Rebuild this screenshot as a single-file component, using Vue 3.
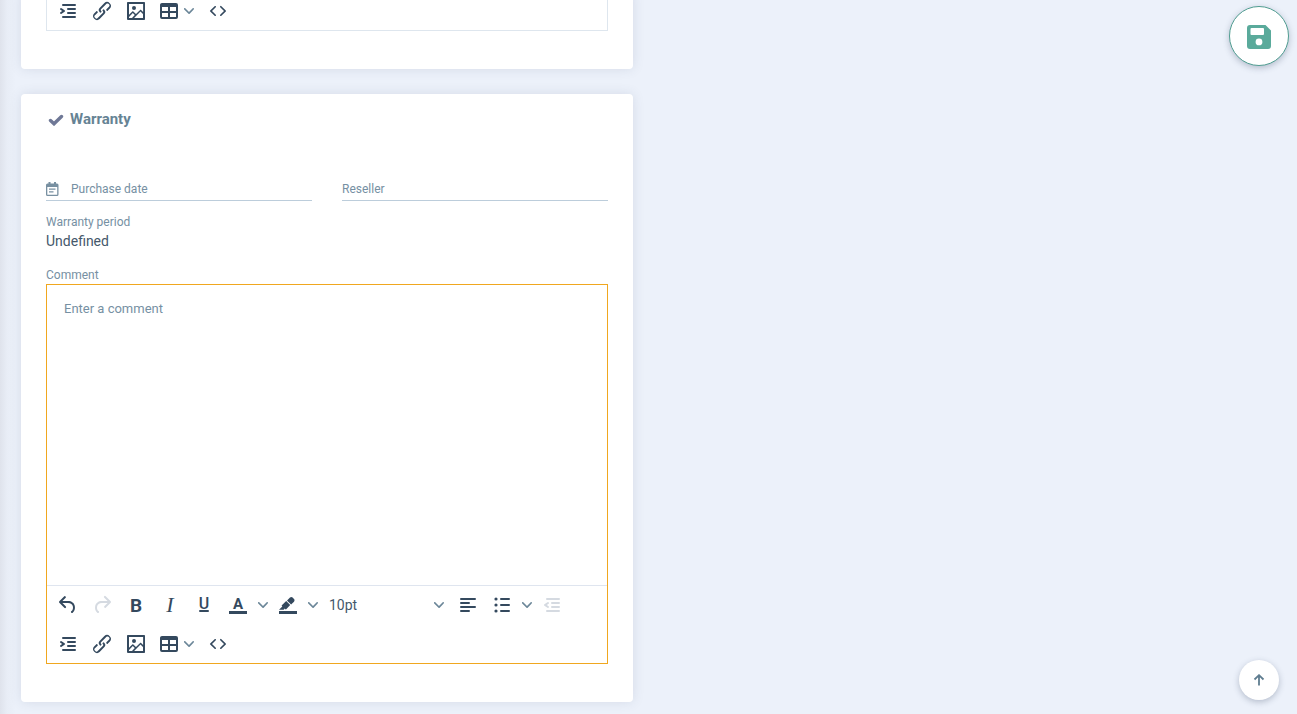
<script setup>
import { ref, h } from 'vue'

const comment = ref('')
const fontSize = ref('10pt')

const lines = (rows) => rows.map(([x, y, w]) => `M${x + 1} ${y}h${w - 2}a1 1 0 0 1 0 2H${x + 1}a1 1 0 0 1 0-2z`).join('')

const paths = {
  undo: 'M6.4 8H12c3.7 0 6.2 2 6.8 5.1.6 2.7-.4 5.6-2.3 6.8a1 1 0 0 1-1-1.8c1.1-.6 1.8-2.7 1.4-4.6-.5-2.1-2.1-3.5-4.9-3.5H6.4l3.3 3.3a1 1 0 1 1-1.4 1.4l-5-5a1 1 0 0 1 0-1.4l5-5a1 1 0 0 1 1.4 1.4L6.4 8z',
  redo: 'M17.6 10H12c-2.8 0-4.4 1.4-4.9 3.5-.4 2 .3 4 1.4 4.6a1 1 0 1 1-1 1.8c-2-1.2-2.9-4.1-2.3-6.8.6-3 3-5.1 6.8-5.1h5.6l-3.3-3.3a1 1 0 1 1 1.4-1.4l5 5a1 1 0 0 1 0 1.4l-5 5a1 1 0 0 1-1.4-1.4l3.3-3.3z',
  underline: 'M8 17h8a1 1 0 0 1 0 2H8a1 1 0 0 1 0-2z',
  color: 'M3 18h18v3H3z',
  highlight: 'M3 18h18v3H3zM7.7 16.7H3l3.3-3.3-.7-.8L10.2 8l4 4.1-4 4.2c-.2.2-.6.2-.8 0l-.6-.7-1.1 1.1zm5-7.5L11 7.4l3-2.9a2 2 0 0 1 2.6 0L18 6c.7.7.7 2 0 2.7l-2.9 2.9-1.8-1.8-.5-.6',
  align: lines([[4, 5, 16], [4, 9, 10], [4, 13, 16], [4, 17, 10]]),
  list: lines([[10, 5, 10], [10, 11, 10], [10, 17, 10]]) + [6, 12, 18].map((y) => `M4.4 ${y}a1.6 1.6 0 1 0 3.2 0a1.6 1.6 0 1 0-3.2 0z`).join(''),
  outdent: lines([[6, 5, 14], [11, 9, 9], [11, 13, 9], [6, 17, 14]]) + 'M8.6 13.2a1 1 0 0 1-1.2 1.6l-3-2a1 1 0 0 1 0-1.6l3-2a1 1 0 0 1 1.2 1.6L6.8 12l1.8 1.2z',
  indent: lines([[6, 5, 14], [11, 9, 9], [11, 13, 9], [6, 17, 14]]) + 'M4.4 13.2L6.2 12l-1.8-1.2a1 1 0 0 1 1.2-1.6l3 2a1 1 0 0 1 0 1.6l-3 2a1 1 0 1 1-1.2-1.6z',
  link: 'M6.2 12.3a1 1 0 0 1 1.4 1.4l-2.1 2a2 2 0 1 0 2.7 2.8l4.8-4.8a1 1 0 0 0 0-1.4 1 1 0 1 1 1.4-1.3 2.9 2.9 0 0 1 0 4L9.6 20a3.9 3.9 0 0 1-5.5-5.5l2-2zm11.6-.6a1 1 0 0 1-1.4-1.4l2-2a2 2 0 1 0-2.6-2.8L11 10.3a1 1 0 0 0 0 1.4A1 1 0 1 1 9.6 13a2.9 2.9 0 0 1 0-4L14.4 4a3.9 3.9 0 0 1 5.5 5.5l-2 2z',
  image: 'M5 15.7l3.3-3.2c.3-.3.7-.3 1 0L12 15l4.1-4c.3-.4.8-.4 1 0l2 1.9V5H5v10.7zM5 18V19h3l2.8-2.9-2-2L5 17.9zm14-3l-2.5-2.4-6.4 6.5H19v-4zM4 3h16c.6 0 1 .4 1 1v16c0 .6-.4 1-1 1H4a1 1 0 0 1-1-1V4c0-.6.4-1 1-1zm6 8a2 2 0 1 0 0-4 2 2 0 0 0 0 4z',
  table: 'M19 4a2 2 0 0 1 2 2v12a2 2 0 0 1-2 2H5a2 2 0 0 1-2-2V6c0-1.1.9-2 2-2h14zM5 14v4h6v-4H5zm14 0h-6v4h6v-4zm0-6h-6v4h6V8zM5 12h6V8H5v4z',
  code: 'M9.8 15.7c.3.3.3.8 0 1-.3.4-.9.4-1.2 0l-4.4-4.1a.8.8 0 0 1 0-1.2l4.4-4.2c.3-.3.9-.3 1.2 0 .3.3.3.8 0 1.1L6 12l3.8 3.7zM14.2 15.7c-.3.3-.3.8 0 1 .4.4.9.4 1.2 0l4.4-4.1c.3-.3.3-.8 0-1.2l-4.4-4.2a.8.8 0 0 0-1.2 0c-.3.3-.3.8 0 1.1L18 12l-3.8 3.7z',
}

const letters = {
  bold: { char: 'B', y: 19, size: 19, family: 'Roboto', weight: 700 },
  italic: { char: 'I', y: 19, size: 22, family: 'Liberation Serif', style: 'italic' },
  underline: { char: 'U', y: 16, size: 16, family: 'Roboto', weight: 500 },
  color: { char: 'A', y: 16, size: 15, family: 'Roboto', weight: 700 },
}

const Icon = (props) => {
  const letter = letters[props.name]
  return h('svg', { width: 24, height: 24, viewBox: '0 0 24 24', fill: 'currentColor', 'aria-hidden': 'true' }, [
    paths[props.name] && h('path', { d: paths[props.name], 'fill-rule': props.name === 'image' ? 'evenodd' : 'nonzero' }),
    letter && h('text', {
      x: 12, y: letter.y, 'text-anchor': 'middle', 'font-size': letter.size,
      'font-family': letter.family, 'font-weight': letter.weight, 'font-style': letter.style,
    }, letter.char),
  ])
}
Icon.props = ['name']

const Chevron = () => h('svg', { width: 10, height: 10, viewBox: '0 0 10 10', fill: '#6c8799', 'aria-hidden': 'true' }, [
  h('path', { d: 'M8.7 2.2c.3-.3.8-.3 1 0 .4.4.4.9 0 1.2L5.7 7.8c-.3.3-.9.3-1.2 0L.2 3.4a.8.8 0 0 1 0-1.2c.3-.3.8-.3 1.1 0L5 6l3.7-3.8z' }),
])

const formatTools = [
  { name: 'undo', label: 'Undo' },
  { name: 'redo', label: 'Redo', disabled: true },
  { name: 'bold', label: 'Bold' },
  { name: 'italic', label: 'Italic' },
  { name: 'underline', label: 'Underline' },
  { name: 'color', label: 'Text color', menu: true },
  { name: 'highlight', label: 'Background color', menu: true },
]
const blockTools = [
  { name: 'align', label: 'Align left' },
  { name: 'list', label: 'Bullet list', menu: true },
  { name: 'outdent', label: 'Decrease indent', disabled: true },
]
const insertTools = [
  { name: 'indent', label: 'Increase indent' },
  { name: 'link', label: 'Insert link' },
  { name: 'image', label: 'Insert image' },
  { name: 'table', label: 'Table', dropdown: true },
  { name: 'code', label: 'Source code' },
]
</script>

<template>
  <main class="page">
    <div class="columns">
      <section class="card">
        <div class="editor">
          <div class="toolrow">
            <button v-for="t in insertTools" :key="t.name" type="button" class="tool" :class="{ dropdown: t.dropdown }" :aria-label="t.label">
              <Icon :name="t.name" /><Chevron v-if="t.dropdown" />
            </button>
          </div>
        </div>
      </section>

      <section class="card">
        <h2 class="title">
          <svg width="16" height="14" viewBox="0 0 16 14" aria-hidden="true"><path d="M2.5 8.5L6 11.800L13.500 4.500" fill="none" stroke="#6f7896" stroke-width="3.400" stroke-linecap="round" stroke-linejoin="miter" /></svg>
          Warranty
        </h2>

        <div class="fields">
          <div class="field">
            <svg class="calendar" width="13" height="14" viewBox="0 0 13 14" aria-hidden="true">
              <path fill="#7890a1" fill-rule="evenodd" d="M2.5 0H4.500v1.5h3.500V0h2v1.5h1A1.5 1.5 0 0 1 12.5 3v9.5A1.5 1.5 0 0 1 11 14H1.5A1.5 1.5 0 0 1 0 12.5V3a1.5 1.5 0 0 1 1.5-1.5h1zM1.3 5v7.7h9.9V5zM3 6.5h6.5v1.3H3zM3 9.3h4.5v1.3H3z" />
            </svg>
            <label for="purchase">Purchase date</label>
            <input id="purchase" type="text">
          </div>
          <div class="field">
            <label for="reseller">Reseller</label>
            <input id="reseller" type="text">
          </div>
        </div>

        <dl class="period">
          <dt>Warranty period</dt>
          <dd>Undefined</dd>
        </dl>

        <label class="caption" for="comment">Comment</label>
        <div class="editor active">
          <textarea id="comment" v-model="comment" placeholder="Enter a comment"></textarea>
          <div class="toolbar">
            <div class="toolrow">
              <template v-for="t in formatTools" :key="t.name">
                <button type="button" class="tool" :disabled="t.disabled" :aria-label="t.label"><Icon :name="t.name" /></button>
                <button v-if="t.menu" type="button" class="more" :aria-label="t.label + ' menu'"><Chevron /></button>
              </template>
              <div class="size">
                <select v-model="fontSize" aria-label="Font size"><option>10pt</option></select>
                <Chevron class="size-arrow" />
              </div>
              <template v-for="t in blockTools" :key="t.name">
                <button type="button" class="tool" :disabled="t.disabled" :aria-label="t.label"><Icon :name="t.name" /></button>
                <button v-if="t.menu" type="button" class="more" :aria-label="t.label + ' menu'"><Chevron /></button>
              </template>
            </div>
            <div class="toolrow">
              <button v-for="t in insertTools" :key="t.name" type="button" class="tool" :class="{ dropdown: t.dropdown }" :aria-label="t.label">
                <Icon :name="t.name" /><Chevron v-if="t.dropdown" />
              </button>
            </div>
          </div>
        </div>
      </section>
    </div>

    <button type="button" class="round save" aria-label="Save">
      <svg width="24" height="26" viewBox="0 0 24 26" aria-hidden="true">
        <path fill="#5aaa9b" fill-rule="evenodd" d="M3 2h15.500L24 7.500V23a3 3 0 0 1-3 3H3a3 3 0 0 1-3-3V5a3 3 0 0 1 3-3zM4.500 5a1 1 0 0 0-1 1v5a1 1 0 0 0 1 1h11.500a1 1 0 0 0 1-1V6a1 1 0 0 0-1-1zM12 15.500a3.400 3.400 0 1 0 0 6.800a3.400 3.400 0 0 0 0-6.800z" />
      </svg>
    </button>
    <button type="button" class="round top" aria-label="Back to top">
      <svg width="12" height="12" viewBox="0 0 12 12" aria-hidden="true"><path d="M6 11.500V1.500M1.500 5.500L6 1.200L10.500 5.500" fill="none" stroke="#5f7d90" stroke-width="1.800" /></svg>
    </button>
  </main>
</template>

<style>
html, body { height: 100%; overflow: hidden; background: #ecf1fa; }
#app { height: 100%; }
</style>

<style scoped>
* { box-sizing: border-box; }
.page {
  display: flow-root;
  min-height: 100%;
  padding: 0 26px 0 21px;
  font-family: Roboto, "Liberation Sans", sans-serif;
  font-size: 12px;
  line-height: 18px;
  color: #7690a3;
  background: linear-gradient(90deg, #dfe3ec 0, #e8edf6 7px, #ecf1fa 16px);
}
.columns {
  display: grid;
  grid-template-columns: minmax(0, 1fr);
  gap: 25px;
  width: calc(50% - 13px);
  margin-top: -9px;
}
.card {
  padding: 0 25px 38px;
  background: #fff;
  border-radius: 4px;
  box-shadow: 0 0 12px rgba(60, 75, 110, 0.13);
}
.title {
  display: flex;
  align-items: center;
  gap: 6px;
  height: 50px;
  margin: 0 0 33px;
  padding-left: 2px;
  font-size: 15px;
  font-weight: 700;
  color: #668394;
}
.fields { display: grid; grid-template-columns: 1fr 1fr; gap: 30px; }
.field {
  display: flex;
  align-items: center;
  height: 24px;
  border-bottom: 1px solid #bccddb;
}
.calendar { margin-right: 12px; }
.field input {
  flex: 1;
  min-width: 0;
  height: 20px;
  padding: 0 4px;
  border: 0;
  outline: 0;
  background: none;
}
.period { margin: 12px 0 15px; }
.period dd { margin: 0; font-size: 14px; line-height: 20px; color: #45586b; }
.caption { display: block; }
.editor { border: 1px solid #dee6ee; }
.active { border-color: #f0a71f; }
textarea {
  display: block;
  width: 100%;
  height: 300px;
  padding: 15px 17px;
  border: 0;
  outline: 0;
  resize: none;
  font: 13px/18px Roboto, sans-serif;
  color: #45586b;
}
textarea::placeholder { color: #7690a3; opacity: 1; }
.toolbar { display: grid; gap: 1px; border-top: 1px solid #dfe5ef; }
.toolrow { display: flex; align-items: center; height: 38px; padding: 0 4px; }
button { font: inherit; border: 0; cursor: pointer; }
.tool, .more {
  display: flex;
  align-items: center;
  justify-content: center;
  flex: none;
  width: 34px;
  height: 34px;
  padding: 0;
  color: #34495e;
  background: none;
}
.tool:disabled { color: #d5dae1; }
.more { width: 16px; }
.dropdown { justify-content: flex-start; gap: 3px; width: 48px; padding-left: 4px; }
.size { position: relative; flex: none; width: 130px; }
select {
  width: 100%;
  height: 34px;
  padding: 0 8px;
  border: 0;
  outline: 0;
  appearance: none;
  background: none;
  font: 14px/20px Roboto, sans-serif;
  color: #45586b;
}
.size-arrow { position: absolute; right: 7px; top: 12px; pointer-events: none; }
.round {
  position: fixed;
  display: flex;
  align-items: center;
  justify-content: center;
  padding: 0;
  border-radius: 50%;
  background: #fff;
  box-shadow: 0 2px 6px rgba(50, 65, 95, 0.3);
}
.save { top: 6px; right: 8px; width: 60px; height: 60px; border: 1px solid #4f9c90; }
.top { right: 18px; bottom: 14px; width: 40px; height: 40px; }
</style>
